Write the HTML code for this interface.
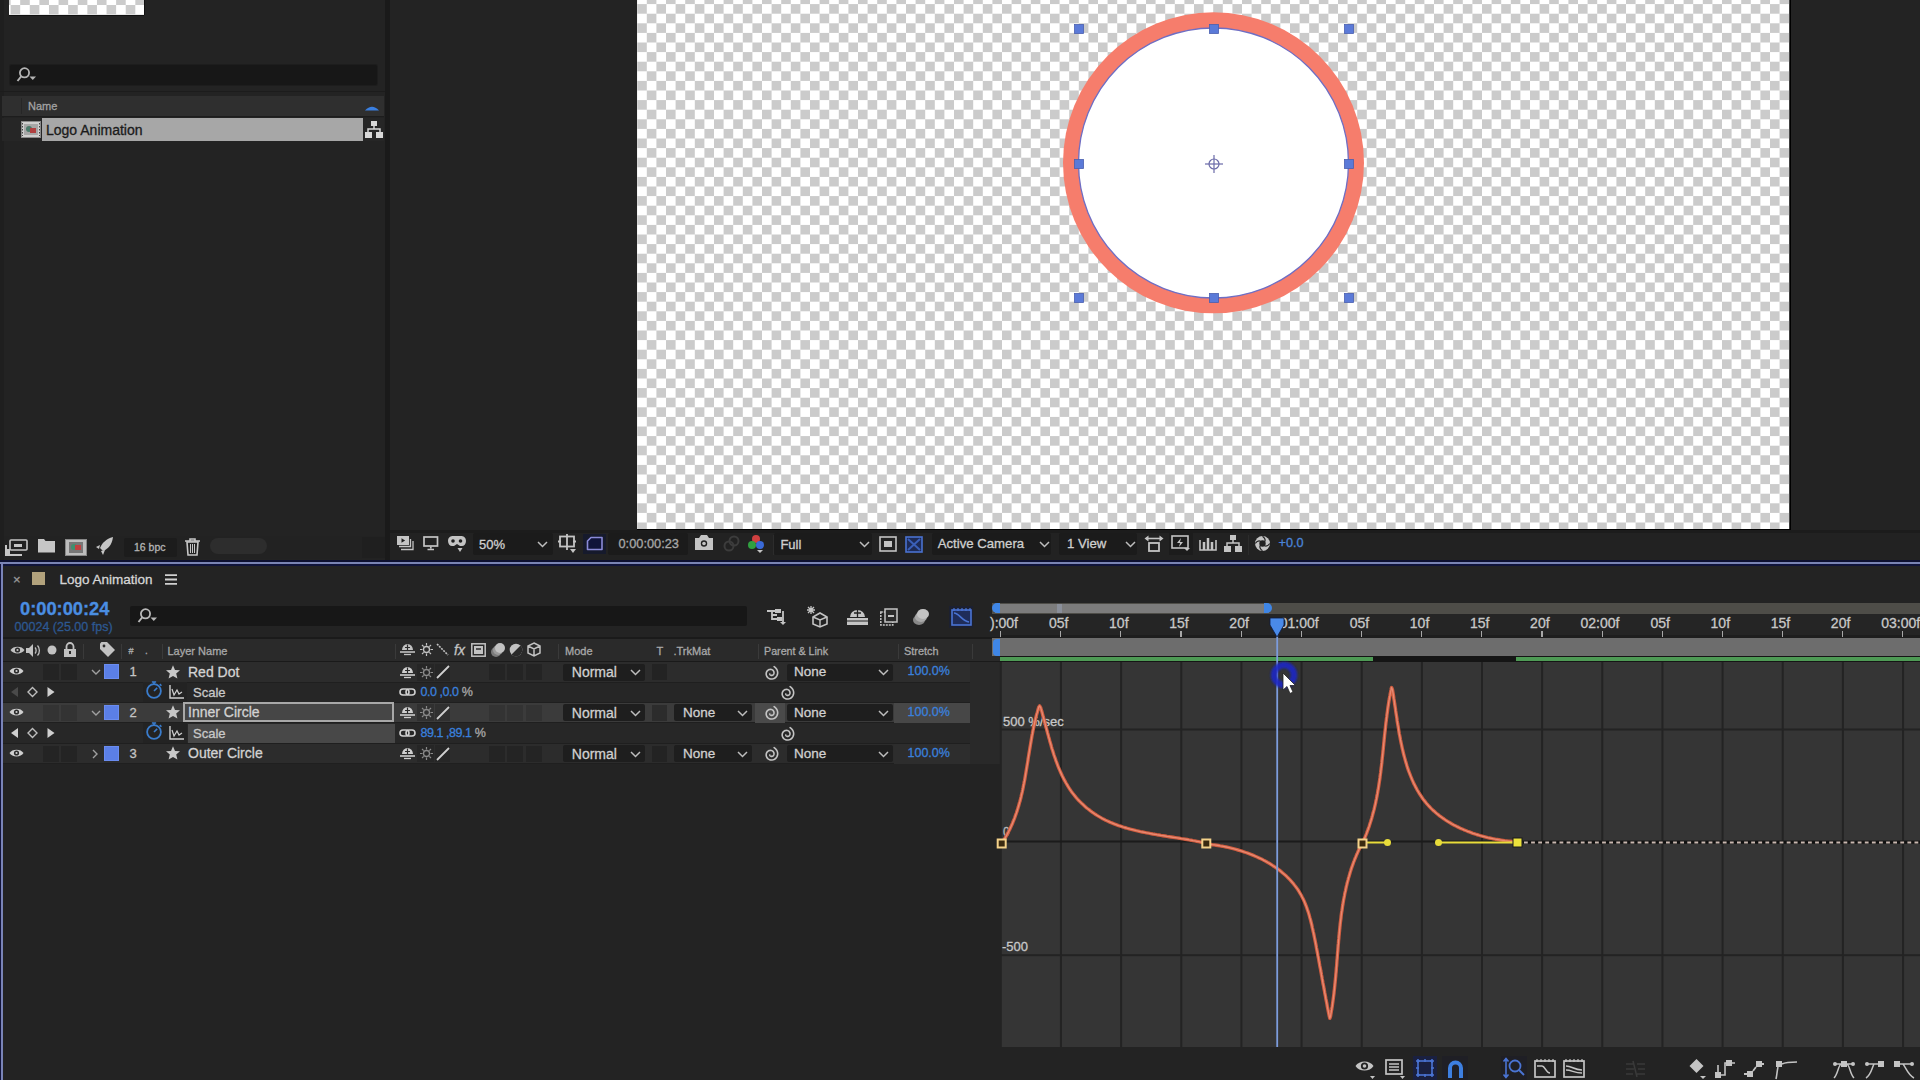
<!DOCTYPE html>
<html><head><meta charset="utf-8"><title>After Effects</title>
<style>
html,body{margin:0;padding:0;}
body{width:1920px;height:1080px;overflow:hidden;background:#232323;position:relative;font-family:"Liberation Sans", sans-serif;}
.a{position:absolute;}
.t{white-space:nowrap;-webkit-text-stroke:0.3px currentColor;}
svg{position:absolute;overflow:visible;}
.hdr svg{margin-top:-1.8px;}
</style></head>
<body>
<div class="a" style="left:0px;top:0px;width:385px;height:560px;background:#232323;"></div>
<div class="a" style="left:0px;top:0px;width:4px;height:560px;background:#1f1f1f;"></div>
<div class="a" style="left:9.2px;top:0;width:135px;height:14.6px;background-color:#fff;background-image:conic-gradient(#cbcbcb 0 25%,#fff 0 50%,#cbcbcb 0 75%,#fff 0);background-size:19.2px 19.2px;background-position:1.6px -4.6px;box-shadow:0 1px 0 0 #111,1px 0 0 0 #111;"></div>
<div class="a" style="left:10px;top:65px;width:367px;height:20px;background:#171717;border-radius:2px;box-shadow:0 0 0 1px #1d1d1d;"></div>
<svg style="left:16px;top:67px" width="24" height="16" viewBox="0 0 24 16"><circle cx="8.5" cy="5.8" r="4.6" fill="none" stroke="#b4b4b4" stroke-width="1.8"/><line x1="5.5" y1="9" x2="1.5" y2="14" stroke="#b4b4b4" stroke-width="2"/><path d="M13.5 9.5 h6.5 l-3.25 3.5z" fill="#b4b4b4"/></svg>
<div class="a" style="left:0px;top:91px;width:385px;height:1px;background:#1c1c1c;"></div>
<div class="a" style="left:2px;top:96px;width:382px;height:20px;background:#2f2f2f;"></div>
<div class="a" style="left:2px;top:116px;width:382px;height:1px;background:#1d1d1d;"></div>
<div class="a" style="left:21px;top:98px;width:1px;height:16px;background:#262626;"></div>
<div class="a t" style="left:28px;top:101px;font-size:11px;line-height:11px;color:#a2a2a2;">Name</div>
<svg style="left:364px;top:103px" width="16" height="9" viewBox="0 0 16 9"><path d="M1 7.5 Q8 0 15 7.5z" fill="#3a7fe0"/></svg>
<div class="a" style="left:2px;top:118px;width:382px;height:23px;background:#262626;"></div>
<div class="a" style="left:42px;top:118px;width:321px;height:23px;background:#a7a7a7;"></div>
<div class="a t" style="left:46px;top:123px;font-size:14px;line-height:14px;color:#1b1b1b;">Logo Animation</div>
<svg style="left:21px;top:121px" width="20" height="17" viewBox="0 0 20 17"><rect x="0.5" y="0.5" width="19" height="16" fill="#cfcfcf" stroke="#8a8a8a"/><rect x="3" y="3" width="14" height="11" fill="#a7a7a7"/><circle cx="8" cy="8" r="3" fill="#4a7a6a"/><rect x="9" y="7" width="6" height="5" fill="#b04040"/><path d="M1.5 2v13M18.5 2v13" stroke="#444" stroke-dasharray="1.5 1.5"/></svg>
<svg style="left:365px;top:121px" width="18" height="17" viewBox="0 0 18 17"><rect x="6" y="0" width="6" height="5" fill="#d8d8d8"/><path d="M9 5v3M3 11V8h12v3" stroke="#d8d8d8" stroke-width="1.5" fill="none"/><rect x="0" y="11" width="7" height="6" fill="#d8d8d8"/><rect x="11" y="11" width="7" height="6" fill="#d8d8d8"/></svg>
<div class="a" style="left:4px;top:536px;width:381px;height:23px;background:#222222;"></div>
<svg style="left:5px;top:539px" width="23" height="17" viewBox="0 0 23 17"><rect x="5" y="1" width="17" height="10" rx="1" fill="none" stroke="#c6c6c6" stroke-width="1.6"/><rect x="9" y="5" width="8" height="3" fill="#c6c6c6"/><path d="M1 6v10h16" fill="none" stroke="#c6c6c6" stroke-width="2"/><rect x="1" y="10" width="4" height="6" fill="#c6c6c6"/></svg>
<svg style="left:38px;top:539px" width="17" height="14" viewBox="0 0 17 14"><path d="M0 0h6l1.5 2H17v11.5H0z" fill="#c6c6c6"/></svg>
<svg style="left:65px;top:539px" width="22" height="17" viewBox="0 0 22 17"><rect x="0.5" y="0.5" width="21" height="16" fill="#bdbdbd" stroke="#888"/><rect x="4" y="3" width="14" height="11" fill="#777"/><circle cx="9" cy="8" r="3" fill="#3f8f6f"/><rect x="10" y="6" width="6" height="5" fill="#c04040"/></svg>
<svg style="left:96px;top:537px" width="18" height="18" viewBox="0 0 18 18"><path d="M17 0 C10 2 6 6 4 11 L7 14 C12 12 16 8 17 0z" fill="#c6c6c6"/><path d="M4 8 L0 10 L3 12z M9 13 L7 18 L5 14z" fill="#c6c6c6"/></svg>
<div class="a" style="left:124px;top:538px;width:53px;height:19px;background:#1c1c1c;border-radius:2px;"></div>
<div class="a t" style="left:134px;top:542px;font-size:10.5px;line-height:10.5px;color:#b4b4b4;">16 bpc</div>
<svg style="left:185px;top:538px" width="15" height="17" viewBox="0 0 15 17"><path d="M0 3h15M5 3V1h5v2" fill="none" stroke="#c6c6c6" stroke-width="1.6"/><path d="M2 4h11l-1 13H3z" fill="none" stroke="#c6c6c6" stroke-width="1.6"/><path d="M5.5 6v9M7.5 6v9M9.5 6v9" stroke="#c6c6c6" stroke-width="1"/></svg>
<div class="a" style="left:210px;top:538px;width:57px;height:16px;background:#2d2d2d;border-radius:8px;"></div>
<div class="a" style="left:362px;top:537px;width:23px;height:21px;background:#1f1f1f;"></div>
<div class="a" style="left:385px;top:0px;width:5px;height:560px;background:#1a1a1a;"></div>
<div class="a" style="left:390px;top:0px;width:1530px;height:529px;background:#232323;"></div>
<svg style="left:0;top:0" width="1920" height="540"><defs><pattern id="ck" patternUnits="userSpaceOnUse" x="637.2" y="-5.5" width="19.2" height="19.2"><rect width="19.2" height="19.2" fill="#ffffff"/><rect x="9.6" y="0" width="9.6" height="9.6" fill="#cbcbcb"/><rect x="0" y="9.6" width="9.6" height="9.6" fill="#cbcbcb"/></pattern></defs><rect x="637" y="0" width="1152.5" height="529" fill="url(#ck)"/><rect x="1789.5" y="0" width="1.5" height="530" fill="#000"/><rect x="637" y="529" width="1154" height="1.5" fill="#000"/><circle cx="1213.5" cy="162.8" r="150.5" fill="#f67d6c"/><circle cx="1213.5" cy="163" r="135" fill="#ffffff"/><circle cx="1213.5" cy="163" r="135" fill="none" stroke="#6e6ec4" stroke-width="1.3"/>
<rect x="1074.5" y="24.5" width="9" height="9" fill="#5b7ad8" stroke="#4a5fb0" stroke-width="0.8"/>
<rect x="1209.5" y="24.5" width="9" height="9" fill="#5b7ad8" stroke="#4a5fb0" stroke-width="0.8"/>
<rect x="1344.5" y="24.5" width="9" height="9" fill="#5b7ad8" stroke="#4a5fb0" stroke-width="0.8"/>
<rect x="1074.5" y="159.5" width="9" height="9" fill="#5b7ad8" stroke="#4a5fb0" stroke-width="0.8"/>
<rect x="1344.5" y="159.5" width="9" height="9" fill="#5b7ad8" stroke="#4a5fb0" stroke-width="0.8"/>
<rect x="1074.5" y="293.5" width="9" height="9" fill="#5b7ad8" stroke="#4a5fb0" stroke-width="0.8"/>
<rect x="1209.5" y="293.5" width="9" height="9" fill="#5b7ad8" stroke="#4a5fb0" stroke-width="0.8"/>
<rect x="1344.5" y="293.5" width="9" height="9" fill="#5b7ad8" stroke="#4a5fb0" stroke-width="0.8"/>
<g stroke="#6a6aa8" fill="none" stroke-width="1.2"><circle cx="1214" cy="164" r="5"/><line x1="1205" y1="164" x2="1223" y2="164"/><line x1="1214" y1="155" x2="1214" y2="173"/></g>
</svg>
<div class="a" style="left:390px;top:530px;width:1530px;height:3px;background:#1c1c1c;"></div>
<div class="a" style="left:390px;top:533px;width:1530px;height:27px;background:#222222;"></div>
<svg style="left:397px;top:536px" width="17" height="15" viewBox="0 0 17 15"><rect x="0" y="0" width="12" height="9" fill="#c4c4c4"/><path d="M4.5 2.2v4.6l3.6-2.3z" fill="#1d1d1d"/><path d="M2 10.5h11.5V3M4 13.5h12V5" fill="none" stroke="#c4c4c4" stroke-width="1.3"/></svg>
<svg style="left:423px;top:535.5px" width="16" height="15" viewBox="0 0 16 15"><rect x="1" y="1" width="13.5" height="9" fill="none" stroke="#c4c4c4" stroke-width="1.7"/><path d="M7.8 10.5v2M4.5 13.5h6.5" stroke="#c4c4c4" stroke-width="1.7"/></svg>
<svg style="left:447px;top:536px" width="20" height="17" viewBox="0 0 20 17"><path d="M1 5C1 1 4 0 6 0h8c2 0 5 1 5 5c0 3-2 5-4 5h-2l-3-2-3 2H5C3 10 1 8 1 5z" fill="#c4c4c4"/><circle cx="6" cy="5" r="1.8" fill="#1d1d1d"/><circle cx="13.5" cy="5" r="1.8" fill="#1d1d1d"/><path d="M10.5 12h5l-2.5 4z" fill="#c4c4c4"/></svg>
<div class="a" style="left:473px;top:533px;width:80px;height:22px;background:#1b1b1b;border-radius:2px;"></div>
<div class="a t" style="left:479px;top:537.5px;font-size:13px;line-height:13px;color:#cfcfcf;">50%</div>
<svg style="left:537px;top:541.0px" width="11" height="7" viewBox="0 0 11 7"><path d="M1 1 L5.5 5.5 L10 1" fill="none" stroke="#bdbdbd" stroke-width="1.5"/></svg>
<svg style="left:557px;top:533px" width="20" height="21" viewBox="0 0 20 21"><rect x="3" y="3.5" width="14" height="10" fill="none" stroke="#c4c4c4" stroke-width="1.8"/><path d="M10 1v16M1 8.5h3M16 8.5h3" stroke="#c4c4c4" stroke-width="1.8"/><path d="M13 16h6l-3 4z" fill="#c4c4c4"/></svg>
<div class="a" style="left:583px;top:534px;width:23px;height:20px;background:#161a2c;"></div>
<svg style="left:585px;top:535px" width="19" height="17" viewBox="0 0 19 17"><path d="M6 2.5h11v12H2.5V6z" fill="#10143a" stroke="#8a8ad8" stroke-width="1.6" stroke-linejoin="round"/></svg>
<div class="a" style="left:608px;top:533px;width:80px;height:22px;background:#1b1b1b;border-radius:2px;"></div>
<div class="a t" style="left:618.5px;top:537.6px;font-size:12.8px;line-height:12.8px;color:#a8a8a8;">0:00:00:23</div>
<svg style="left:695px;top:535px" width="18" height="15" viewBox="0 0 18 15"><path d="M0 3h4l2-3h6l2 3h4v12H0z" fill="#c4c4c4"/><circle cx="9" cy="8.5" r="3.2" fill="#222"/><circle cx="9" cy="8.5" r="1.8" fill="#c4c4c4"/></svg>
<svg style="left:723px;top:536px" width="17" height="16" viewBox="0 0 17 16"><circle cx="6" cy="10" r="4.5" fill="none" stroke="#3c3c3c" stroke-width="2"/><circle cx="11" cy="5" r="4.5" fill="none" stroke="#3c3c3c" stroke-width="2"/></svg>
<svg style="left:747px;top:534px" width="19" height="20" viewBox="0 0 19 20"><circle cx="9" cy="5" r="4" fill="#d04040"/><circle cx="5" cy="11" r="4" fill="#30a040"/><circle cx="13" cy="11" r="4" fill="#3a6ad8"/><path d="M10 16h6l-3 3z" fill="#c4c4c4"/></svg>
<div class="a" style="left:773px;top:535px;width:1px;height:20px;background:#2c2c2c;"></div>
<div class="a" style="left:774px;top:533px;width:98px;height:22px;background:#1b1b1b;border-radius:2px;"></div>
<div class="a t" style="left:780.4px;top:537.5px;font-size:13px;line-height:13px;color:#cfcfcf;">Full</div>
<svg style="left:858.5px;top:541.0px" width="11" height="7" viewBox="0 0 11 7"><path d="M1 1 L5.5 5.5 L10 1" fill="none" stroke="#bdbdbd" stroke-width="1.5"/></svg>
<svg style="left:879px;top:536px" width="18" height="16" viewBox="0 0 18 16"><rect x="1" y="1" width="16" height="14" fill="none" stroke="#c4c4c4" stroke-width="1.6"/><rect x="5" y="5" width="8" height="6" fill="#c4c4c4"/></svg>
<svg style="left:905px;top:536px" width="18" height="17" viewBox="0 0 18 17"><rect x="1" y="1" width="16" height="15" fill="#1d2a55" stroke="#4a72d0" stroke-width="1.6"/><path d="M3 3l12 11M15 3L3 14" stroke="#3a5fb8" stroke-width="2"/></svg>
<div class="a" style="left:932px;top:533px;width:119px;height:22px;background:#1b1b1b;border-radius:2px;"></div>
<div class="a t" style="left:937.7px;top:537.4px;font-size:13.2px;line-height:13.2px;color:#cfcfcf;">Active Camera</div>
<svg style="left:1038.5px;top:541.0px" width="11" height="7" viewBox="0 0 11 7"><path d="M1 1 L5.5 5.5 L10 1" fill="none" stroke="#bdbdbd" stroke-width="1.5"/></svg>
<div class="a" style="left:1059px;top:533px;width:78px;height:22px;background:#1b1b1b;border-radius:2px;"></div>
<div class="a t" style="left:1067px;top:537.4px;font-size:13.2px;line-height:13.2px;color:#cfcfcf;">1 View</div>
<svg style="left:1125px;top:541.0px" width="11" height="7" viewBox="0 0 11 7"><path d="M1 1 L5.5 5.5 L10 1" fill="none" stroke="#bdbdbd" stroke-width="1.5"/></svg>
<svg style="left:1144px;top:535px" width="20" height="17" viewBox="0 0 20 17"><path d="M2 3.5h16" stroke="#c4c4c4" stroke-width="1.6"/><path d="M0.5 3.5l4-3v6zM19.5 3.5l-4-3v6z" fill="#c4c4c4"/><rect x="5" y="8" width="10" height="8" fill="none" stroke="#c4c4c4" stroke-width="1.8"/></svg>
<div class="a" style="left:1169px;top:533px;width:24px;height:22px;background:#1c1c1c;"></div>
<svg style="left:1171px;top:535px" width="20" height="18" viewBox="0 0 20 18"><rect x="1" y="1" width="16" height="12" fill="none" stroke="#c4c4c4" stroke-width="1.6"/><path d="M10 3l-4 5h3l-1 4 4-5H9z" fill="#c4c4c4"/><path d="M13 13h6l-3 3z" fill="#c4c4c4"/></svg>
<svg style="left:1199px;top:536px" width="18" height="15" viewBox="0 0 18 15"><path d="M1 4v10h16V4" fill="none" stroke="#c4c4c4" stroke-width="1.6"/><path d="M5 14V6M9 14V2M13 14V6" stroke="#c4c4c4" stroke-width="2.5"/></svg>
<svg style="left:1224px;top:535px" width="18" height="17" viewBox="0 0 18 17"><rect x="6" y="0" width="6" height="5" fill="#c4c4c4"/><path d="M9 5v3M3 11V8h12v3" stroke="#c4c4c4" stroke-width="1.5" fill="none"/><rect x="0" y="11" width="7" height="6" fill="#c4c4c4"/><rect x="11" y="11" width="7" height="6" fill="#c4c4c4"/></svg>
<div class="a" style="left:1248px;top:535px;width:1px;height:20px;background:#2c2c2c;"></div>
<svg style="left:1254px;top:535px" width="17" height="17" viewBox="0 0 17 17"><circle cx="8.5" cy="8.5" r="7.5" fill="#c4c4c4"/><circle cx="8.5" cy="8.5" r="3.2" fill="#222"/><path d="M8.5 1.2C11 3 11.5 5 10.8 6.5M15.8 8.5c-1.8 2.5-3.8 3-5.3 2.3M8.5 15.8c-2.5-1.8-3-3.8-2.3-5.3M1.2 8.5c1.8-2.5 3.8-3 5.3-2.3" fill="none" stroke="#222" stroke-width="1.2"/></svg>
<div class="a t" style="left:1278.5px;top:537px;font-size:12.7px;line-height:12.7px;color:#4a84d8;">+0.0</div>
<div class="a" style="left:0px;top:560px;width:1920px;height:2px;background:#0d1030;"></div>
<div class="a" style="left:0px;top:562px;width:1920px;height:2px;background:#7a84b4;"></div>
<div class="a" style="left:0px;top:564px;width:1920px;height:1.5px;background:#10143a;"></div>
<div class="a" style="left:0px;top:564px;width:1px;height:516px;background:#12143a;"></div>
<div class="a" style="left:1px;top:563px;width:1.6px;height:517px;background:#7a84b8;"></div>
<div class="a" style="left:2.6px;top:564px;width:1px;height:516px;background:#15173a;"></div>
<div class="a" style="left:3px;top:566px;width:1917px;height:514px;background:#232323;"></div>
<div class="a t" style="left:13px;top:573px;font-size:13px;line-height:13px;color:#9a9a9a;">&#215;</div>
<div class="a" style="left:32px;top:572px;width:13px;height:13px;background:#b2a27c;"></div>
<div class="a t" style="left:59.4px;top:572.5px;font-size:13.5px;line-height:13.5px;color:#d6d6d6;">Logo Animation</div>
<svg style="left:165px;top:574px" width="12" height="11" viewBox="0 0 12 11"><path d="M0 1.2h12M0 5.5h12M0 9.8h12" stroke="#d0d0d0" stroke-width="1.8"/></svg>
<div class="a t" style="left:20px;top:600px;font-size:18.3px;line-height:18.3px;color:#4a8ee2;font-weight:bold;">0:00:00:24</div>
<div class="a t" style="left:14.6px;top:621px;font-size:12.5px;line-height:12.5px;color:#2d5891;">00024 (25.00 fps)</div>
<div class="a" style="left:130px;top:606px;width:617px;height:20px;background:#171717;border-radius:2px;"></div>
<svg style="left:137px;top:608px" width="24" height="16" viewBox="0 0 24 16"><circle cx="8.5" cy="5.8" r="4.6" fill="none" stroke="#b8b8b8" stroke-width="1.8"/><line x1="5.5" y1="9" x2="1.5" y2="14" stroke="#b8b8b8" stroke-width="2"/><path d="M13.5 9.5 h6.5 l-3.25 3.5z" fill="#b8b8b8"/></svg>
<svg style="left:766px;top:608px" width="22" height="18" viewBox="0 0 22 18"><path d="M1 3h8M6 3v8h5M6 7h5M17 3v12" stroke="#c4c4c4" stroke-width="1.8" fill="none"/><rect x="9" y="1" width="6" height="4" fill="#c4c4c4"/><rect x="11" y="9" width="5" height="4" fill="#c4c4c4"/><path d="M14 14h6l-3 3z" fill="#c4c4c4"/></svg>
<svg style="left:806px;top:606px" width="22" height="21" viewBox="0 0 22 21"><path d="M5 0v8M1 4h8M2 1l6 6M8 1L2 7" stroke="#c4c4c4" stroke-width="1.3"/><path d="M14 7l7 4v7l-7 3-7-3v-7z" fill="none" stroke="#c4c4c4" stroke-width="1.6"/><path d="M7 11l7 3 7-3M14 14v7" stroke="#c4c4c4" stroke-width="1.4" fill="none"/></svg>
<svg style="left:847px;top:608px" width="21" height="17" viewBox="0 0 21 17"><path d="M3 9a7.5 7 0 0 1 15 0z" fill="#c4c4c4"/><path d="M10.5 2v10M7 5h7" stroke="#222" stroke-width="1.3"/><rect x="0" y="10" width="21" height="7" fill="#c4c4c4"/><path d="M0 13h21" stroke="#222" stroke-width="1"/></svg>
<svg style="left:880px;top:608px" width="18" height="18" viewBox="0 0 18 18"><rect x="0.8" y="4" width="12" height="13" fill="none" stroke="#c4c4c4" stroke-width="1.5" stroke-dasharray="2 1"/><rect x="5" y="1" width="12" height="13" fill="#2a2a2a" stroke="#c4c4c4" stroke-width="1.5"/><path d="M8 8h6" stroke="#c4c4c4" stroke-width="2"/></svg>
<svg style="left:912px;top:608px" width="18" height="18" viewBox="0 0 18 18"><ellipse cx="7" cy="12" rx="6" ry="5" fill="#888"/><ellipse cx="9" cy="9" rx="6" ry="5" fill="#aaa"/><ellipse cx="11" cy="6" rx="6" ry="5" fill="#c4c4c4"/></svg>
<div class="a" style="left:949px;top:606px;width:24px;height:22px;background:#1c2030;"></div>
<svg style="left:951px;top:607px" width="21" height="19" viewBox="0 0 21 19"><rect x="1" y="3" width="19" height="15" fill="#1f2d5a" stroke="#4a74d4" stroke-width="1.6"/><path d="M3 1v3M7 1v3M11 1v3M15 1v3M19 1v3" stroke="#4a74d4" stroke-width="1.2"/><path d="M3 6c5 0 8 8 15 9" fill="none" stroke="#4a74d4" stroke-width="1.6"/></svg>
<div class="a" style="left:3px;top:637px;width:997px;height:1.5px;background:#1a1a1a;"></div>
<div class="a" style="left:3px;top:638.5px;width:997px;height:22.5px;background:#2a2a2a;"></div>
<div class="a" style="left:3px;top:661px;width:997px;height:1.5px;background:#1a1a1a;"></div>
<div class="a hdr" style="left:0;top:1.5px;width:1000px;height:0">
<svg style="left:9.5px;top:645px" width="15" height="10" viewBox="0 0 15 10"><path d="M0.5 5C3 0.5 12 0.5 14.5 5C12 9.5 3 9.5 0.5 5z" fill="#c2c2c2"/><circle cx="7.5" cy="5" r="2.6" fill="#2a2a2a"/><circle cx="7.5" cy="5" r="1.1" fill="#c2c2c2"/></svg>
<svg style="left:26px;top:643px" width="15" height="15" viewBox="0 0 15 15"><path d="M0 5h3l4-4v13l-4-4H0z" fill="#c2c2c2"/><path d="M9 4.5c1.5 1.5 1.5 4.5 0 6M11.5 2.5c2.5 2.5 2.5 7.5 0 10" fill="none" stroke="#c2c2c2" stroke-width="1.3"/></svg>
<svg style="left:47px;top:645px" width="10" height="10" viewBox="0 0 10 10"><circle cx="5" cy="5" r="4.5" fill="#c2c2c2"/></svg>
<svg style="left:62.5px;top:642px" width="14" height="15" viewBox="0 0 14 15"><path d="M3.5 7V4.5a3.5 3.5 0 0 1 7 0V7" fill="none" stroke="#c2c2c2" stroke-width="1.8"/><rect x="1" y="7" width="12" height="8" fill="#c2c2c2"/><rect x="6" y="9" width="2" height="3" fill="#2a2a2a"/></svg>
<div class="a" style="left:83px;top:642px;width:1px;height:15px;background:#3a3a3a;"></div>
<svg style="left:100px;top:642px" width="15" height="15" viewBox="0 0 15 15"><path d="M0 1.5V7l8 8 7-7-8-8H1.5z" fill="#c2c2c2"/><circle cx="4" cy="4" r="1.4" fill="#2a2a2a"/></svg>
<div class="a" style="left:121px;top:642px;width:1px;height:15px;background:#3a3a3a;"></div>
<div class="a t" style="left:128.5px;top:645.5px;font-size:9px;line-height:9px;color:#a8a8a8;">#</div>
<div class="a t" style="left:145px;top:644.5px;font-size:10px;line-height:10px;color:#a8a8a8;">.</div>
<div class="a" style="left:161.5px;top:642px;width:1px;height:15px;background:#3a3a3a;"></div>
<div class="a t" style="left:167.5px;top:644px;font-size:11px;line-height:11px;color:#a8a8a8;">Layer Name</div>
<div class="a" style="left:394.5px;top:642px;width:1px;height:15px;background:#3a3a3a;"></div>
<svg style="left:400px;top:642px" width="15" height="15" viewBox="0 0 15 15"><path d="M2 8a5.5 6 0 0 1 11 0z" fill="#c2c2c2"/><path d="M7.5 2.5v8M5 5.5h5" stroke="#2b2b2b" stroke-width="1.2"/><path d="M0 10h15" stroke="#c2c2c2" stroke-width="1.6"/><path d="M4 12.5h7" stroke="#c2c2c2" stroke-width="1.3"/></svg>
<svg style="left:420px;top:643px" width="13" height="13" viewBox="0 0 13 13"><circle cx="6.5" cy="6.5" r="3" fill="none" stroke="#c2c2c2" stroke-width="1.3"/><path d="M6.5 0v2.5M6.5 10.5V13M0 6.5h2.5M10.5 6.5H13M2 2l1.7 1.7M9.3 9.3L11 11M11 2L9.3 3.7M3.7 9.3L2 11" stroke="#c2c2c2" stroke-width="1.2"/></svg>
<svg style="left:436px;top:643px" width="13" height="13" viewBox="0 0 13 13"><path d="M1 1L12 12" stroke="#c2c2c2" stroke-width="1.6" stroke-dasharray="2 1"/></svg>
<div class="a t" style="left:454px;top:641.5px;font-size:14px;line-height:14px;color:#c2c2c2;font-family:"Liberation Serif",serif;"><i>fx</i></div>
<svg style="left:471px;top:643px" width="15" height="14" viewBox="0 0 15 14"><rect x="0.8" y="0.8" width="13.4" height="12.4" fill="none" stroke="#c2c2c2" stroke-width="1.5"/><rect x="3" y="3" width="9" height="8" fill="#c2c2c2"/><path d="M5 6h5" stroke="#2a2a2a" stroke-width="1.5"/></svg>
<svg style="left:490px;top:642px" width="16" height="16" viewBox="0 0 16 16"><circle cx="6" cy="10" r="5" fill="#7a7a7a"/><circle cx="8" cy="8" r="5" fill="#9a9a9a"/><circle cx="10" cy="6" r="5" fill="#c2c2c2"/></svg>
<svg style="left:508.7px;top:643px" width="14" height="14" viewBox="0 0 14 14"><circle cx="7" cy="7" r="6.3" fill="#c2c2c2"/><path d="M11.5 2.5L2.5 11.5A6.3 6.3 0 0 0 11.5 2.5z" fill="#2a2a2a"/></svg>
<svg style="left:526.5px;top:642px" width="14" height="15" viewBox="0 0 14 15"><path d="M7 1l6 3v7l-6 3-6-3V4z M1 4l6 3 6-3M7 7v7" fill="none" stroke="#c2c2c2" stroke-width="1.5"/></svg>
<div class="a" style="left:558px;top:642px;width:1px;height:15px;background:#3a3a3a;"></div>
<div class="a t" style="left:565px;top:644px;font-size:11px;line-height:11px;color:#a8a8a8;">Mode</div>
<div class="a t" style="left:656.5px;top:644px;font-size:11px;line-height:11px;color:#a8a8a8;">T</div>
<div class="a t" style="left:673.5px;top:644px;font-size:11px;line-height:11px;color:#a8a8a8;">.TrkMat</div>
<div class="a" style="left:757.5px;top:642px;width:1px;height:15px;background:#3a3a3a;"></div>
<div class="a t" style="left:764px;top:644px;font-size:10.7px;line-height:10.7px;color:#a8a8a8;">Parent &amp; Link</div>
<div class="a" style="left:898px;top:642px;width:1px;height:15px;background:#3a3a3a;"></div>
<div class="a t" style="left:904px;top:644px;font-size:10.9px;line-height:10.9px;color:#a8a8a8;">Stretch</div>
<div class="a" style="left:971.5px;top:642px;width:1px;height:15px;background:#3a3a3a;"></div>
</div>
<div class="a" style="left:3px;top:662px;width:967px;height:20px;background:#2c2c2c;"></div>
<div class="a" style="left:3px;top:682px;width:967px;height:20px;background:#262626;"></div>
<div class="a" style="left:3px;top:702.5px;width:967px;height:20px;background:#3b3b3b;"></div>
<div class="a" style="left:3px;top:723px;width:967px;height:20.5px;background:#272727;"></div>
<div class="a" style="left:3px;top:743.5px;width:967px;height:20px;background:#2c2c2c;"></div>
<div class="a" style="left:3px;top:681.5px;width:967px;height:1px;background:#1f1f1f;"></div>
<div class="a" style="left:3px;top:701.5px;width:967px;height:1px;background:#1f1f1f;"></div>
<div class="a" style="left:3px;top:722.0px;width:967px;height:1px;background:#1f1f1f;"></div>
<div class="a" style="left:3px;top:743.0px;width:967px;height:1px;background:#1f1f1f;"></div>
<div class="a" style="left:3px;top:763.0px;width:967px;height:1px;background:#1f1f1f;"></div>
<div class="a" style="left:970px;top:662px;width:31px;height:102px;background:#292929;"></div>
<div class="a" style="left:3px;top:764px;width:967px;height:316px;background:#232323;"></div>
<svg style="left:8.5px;top:666px" width="15" height="10" viewBox="0 0 15 10"><path d="M0.5 5C3 0.5 12 0.5 14.5 5C12 9.5 3 9.5 0.5 5z" fill="#d0d0d0"/><circle cx="7.5" cy="5" r="2.6" fill="#2a2a2a"/><circle cx="7.5" cy="5" r="1.1" fill="#d0d0d0"/></svg>
<div class="a" style="left:43px;top:664px;width:15.5px;height:16px;background:#242424;"></div>
<div class="a" style="left:61px;top:664px;width:15.5px;height:16px;background:#242424;"></div>
<svg style="left:90.5px;top:669px" width="10" height="6" viewBox="0 0 10 6"><path d="M1 1L5 5L9 1" fill="none" stroke="#a0a0a0" stroke-width="1.4"/></svg>
<div class="a" style="left:104px;top:664px;width:15px;height:15px;background:#5b7fe6;box-shadow:inset 0 0 0 1px #6a8cf0;"></div>
<div class="a t" style="left:129.5px;top:665px;font-size:13px;line-height:13px;color:#c4c4c4;">1</div>
<svg style="left:165.5px;top:664.5px" width="14" height="14" viewBox="0 0 14 14"><path d="M7 0.3l2 4.6 5 .4-3.8 3.3 1.2 4.9L7 10.9 2.6 13.5l1.2-4.9L0 5.3l5-.4z" fill="#c8c8c8"/></svg>
<div class="a t" style="left:188px;top:664.5px;font-size:14px;line-height:14px;color:#d2d2d2;">Red Dot</div>
<svg style="left:400px;top:664.5px" width="15" height="15" viewBox="0 0 15 15"><path d="M2 8a5.5 6 0 0 1 11 0z" fill="#cfcfcf"/><path d="M7.5 2.5v8M5 5.5h5" stroke="#2b2b2b" stroke-width="1.2"/><path d="M0 10h15" stroke="#cfcfcf" stroke-width="1.6"/><path d="M4 12.5h7" stroke="#cfcfcf" stroke-width="1.3"/></svg>
<div class="a" style="left:416.5px;top:663.5px;width:17px;height:17px;background:#262626;"></div>
<svg style="left:419.5px;top:665.5px" width="13" height="13" viewBox="0 0 13 13"><circle cx="6.5" cy="6.5" r="3" fill="none" stroke="#8a8a8a" stroke-width="1.3"/><path d="M6.5 0v2.5M6.5 10.5V13M0 6.5h2.5M10.5 6.5H13M2 2l1.7 1.7M9.3 9.3L11 11M11 2L9.3 3.7M3.7 9.3L2 11" stroke="#8a8a8a" stroke-width="1.2"/></svg>
<div class="a" style="left:435px;top:663.5px;width:15px;height:17px;background:#262626;"></div>
<svg style="left:436px;top:665px" width="14" height="14" viewBox="0 0 14 14"><path d="M1 13L13 1" stroke="#cfcfcf" stroke-width="1.8"/></svg>
<div class="a" style="left:489px;top:664px;width:16px;height:16px;background:#242424;"></div>
<div class="a" style="left:507px;top:664px;width:16px;height:16px;background:#242424;"></div>
<div class="a" style="left:525.5px;top:664px;width:16px;height:16px;background:#242424;"></div>
<div class="a" style="left:562.5px;top:663.5px;width:82.5px;height:17px;background:#1e1e1e;border-radius:2px;"></div>
<div class="a t" style="left:571.8px;top:665.0px;font-size:14px;line-height:14px;color:#d0d0d0;">Normal</div>
<svg style="left:630px;top:669.0px" width="11" height="7" viewBox="0 0 11 7"><path d="M1 1 L5.5 5.5 L10 1" fill="none" stroke="#bdbdbd" stroke-width="1.5"/></svg>
<div class="a" style="left:652px;top:664px;width:15px;height:16px;background:#232323;"></div>
<svg style="left:763px;top:664.5px" width="16" height="16" viewBox="0 0 16 16"><path d="M6.78 8.98 L6.83 9.23 L6.94 9.49 L7.10 9.73 L7.31 9.96 L7.57 10.14 L7.88 10.29 L8.23 10.38 L8.60 10.40 L8.98 10.36 L9.37 10.25 L9.74 10.07 L10.09 9.81 L10.40 9.48 L10.66 9.09 L10.85 8.65 L10.97 8.17 L11.00 7.65 L10.94 7.12 L10.79 6.60 L10.54 6.09 L10.20 5.62 L9.77 5.21 L9.26 4.86 L8.69 4.60 L8.07 4.44 L7.41 4.39 L6.73 4.45 L6.06 4.63 L5.42 4.92 L4.82 5.33 L4.29 5.85 L3.84 6.47 L3.50 7.16 L3.27 7.92 L3.18 8.72 L3.22 9.55 L3.40 10.37 L3.73 11.16 L4.20 11.90 L4.79 12.56 L5.50 13.12 L6.31 13.57 L7.20 13.87 L8.14 14.02 L9.11 14.02 L10.08 13.84 L11.03 13.50 L11.92 13.00 L12.72 12.35 L13.41 11.55 L13.97 10.64 L14.38 9.63 L14.61 8.55 L14.65 7.44 L14.51 6.31 L14.18 5.21 L13.65 4.16 L12.95 3.21 L12.09 2.37 L11.09 1.68" fill="none" stroke="#c4c4c4" stroke-width="1.6" stroke-linecap="round"/></svg>
<div class="a" style="left:787px;top:663.5px;width:105.5px;height:17px;background:#1e1e1e;border-radius:2px;"></div>
<div class="a t" style="left:794px;top:665.25px;font-size:13.5px;line-height:13.5px;color:#d0d0d0;">None</div>
<svg style="left:877.5px;top:669.0px" width="11" height="7" viewBox="0 0 11 7"><path d="M1 1 L5.5 5.5 L10 1" fill="none" stroke="#bdbdbd" stroke-width="1.5"/></svg>
<div class="a" style="left:894px;top:662.5px;width:76px;height:19.5px;background:#2d2d2d;"></div>
<div class="a t" style="left:907.5px;top:665px;font-size:12.5px;line-height:12.5px;color:#3a80dc;">100.0%</div>
<svg style="left:10px;top:686px" width="48" height="12" viewBox="0 0 48 12"><path d="M8 1v10L1 6z" fill="#4a4a4a"/><path d="M22.5 1.5l4.5 4.5-4.5 4.5-4.5-4.5z" fill="none" stroke="#bdbdbd" stroke-width="1.4"/><path d="M37.5 1v10l7-5z" fill="#cfcfcf"/></svg>
<div class="a" style="left:143px;top:682px;width:44px;height:20px;background:#232323;"></div>
<svg style="left:144.5px;top:681px" width="18" height="18" viewBox="0 0 17 17"><circle cx="8.5" cy="9.5" r="6.5" fill="none" stroke="#3a7ccc" stroke-width="1.7"/><path d="M6.5 1h4M8.5 1v2M8.5 9.5l3-3M14 3l1.5 1.5" stroke="#3a7ccc" stroke-width="1.5"/></svg>
<svg style="left:168.5px;top:684.5px" width="15" height="14" viewBox="0 0 15 14"><path d="M1 0v13h14" fill="none" stroke="#cfcfcf" stroke-width="1.4"/><path d="M3 4l2 6 3-5 2 4 3-2" fill="none" stroke="#cfcfcf" stroke-width="1.2"/></svg>
<div class="a t" style="left:193px;top:686px;font-size:13px;line-height:13px;color:#c8c8c8;">Scale</div>
<svg style="left:399px;top:687px" width="17" height="10" viewBox="0 0 17 10"><rect x="1" y="2" width="9" height="6" rx="3" fill="none" stroke="#cfcfcf" stroke-width="1.6"/><rect x="7" y="2" width="9" height="6" rx="3" fill="none" stroke="#cfcfcf" stroke-width="1.6"/></svg>
<div class="a t" style="left:420.5px;top:685.5px;font-size:12.5px;line-height:12.5px;color:#3a80dc;letter-spacing:-0.45px;">0.0 ,0.0 <span style="color:#a8a8a8">%</span></div>
<svg style="left:779px;top:684.5px" width="16" height="16" viewBox="0 0 16 16"><path d="M6.78 8.98 L6.83 9.23 L6.94 9.49 L7.10 9.73 L7.31 9.96 L7.57 10.14 L7.88 10.29 L8.23 10.38 L8.60 10.40 L8.98 10.36 L9.37 10.25 L9.74 10.07 L10.09 9.81 L10.40 9.48 L10.66 9.09 L10.85 8.65 L10.97 8.17 L11.00 7.65 L10.94 7.12 L10.79 6.60 L10.54 6.09 L10.20 5.62 L9.77 5.21 L9.26 4.86 L8.69 4.60 L8.07 4.44 L7.41 4.39 L6.73 4.45 L6.06 4.63 L5.42 4.92 L4.82 5.33 L4.29 5.85 L3.84 6.47 L3.50 7.16 L3.27 7.92 L3.18 8.72 L3.22 9.55 L3.40 10.37 L3.73 11.16 L4.20 11.90 L4.79 12.56 L5.50 13.12 L6.31 13.57 L7.20 13.87 L8.14 14.02 L9.11 14.02 L10.08 13.84 L11.03 13.50 L11.92 13.00 L12.72 12.35 L13.41 11.55 L13.97 10.64 L14.38 9.63 L14.61 8.55 L14.65 7.44 L14.51 6.31 L14.18 5.21 L13.65 4.16 L12.95 3.21 L12.09 2.37 L11.09 1.68" fill="none" stroke="#c4c4c4" stroke-width="1.6" stroke-linecap="round"/></svg>
<svg style="left:8.5px;top:706.5px" width="15" height="10" viewBox="0 0 15 10"><path d="M0.5 5C3 0.5 12 0.5 14.5 5C12 9.5 3 9.5 0.5 5z" fill="#d0d0d0"/><circle cx="7.5" cy="5" r="2.6" fill="#2a2a2a"/><circle cx="7.5" cy="5" r="1.1" fill="#d0d0d0"/></svg>
<div class="a" style="left:43px;top:704.5px;width:15.5px;height:16px;background:#333333;"></div>
<div class="a" style="left:61px;top:704.5px;width:15.5px;height:16px;background:#333333;"></div>
<svg style="left:90.5px;top:709.5px" width="10" height="6" viewBox="0 0 10 6"><path d="M1 1L5 5L9 1" fill="none" stroke="#a0a0a0" stroke-width="1.4"/></svg>
<div class="a" style="left:104px;top:704.5px;width:15px;height:15px;background:#5b7fe6;box-shadow:inset 0 0 0 1px #6a8cf0;"></div>
<div class="a t" style="left:129.5px;top:705.5px;font-size:13px;line-height:13px;color:#c4c4c4;">2</div>
<svg style="left:165.5px;top:705.0px" width="14" height="14" viewBox="0 0 14 14"><path d="M7 0.3l2 4.6 5 .4-3.8 3.3 1.2 4.9L7 10.9 2.6 13.5l1.2-4.9L0 5.3l5-.4z" fill="#c8c8c8"/></svg>
<div class="a" style="left:183px;top:702.3px;width:211px;height:20px;background:#464646;box-sizing:border-box;border:2px solid #a8a8a8;"></div>
<div class="a t" style="left:188px;top:705.0px;font-size:14px;line-height:14px;color:#d2d2d2;">Inner Circle</div>
<svg style="left:400px;top:705.0px" width="15" height="15" viewBox="0 0 15 15"><path d="M2 8a5.5 6 0 0 1 11 0z" fill="#cfcfcf"/><path d="M7.5 2.5v8M5 5.5h5" stroke="#2b2b2b" stroke-width="1.2"/><path d="M0 10h15" stroke="#cfcfcf" stroke-width="1.6"/><path d="M4 12.5h7" stroke="#cfcfcf" stroke-width="1.3"/></svg>
<div class="a" style="left:416.5px;top:704.0px;width:17px;height:17px;background:#303030;"></div>
<svg style="left:419.5px;top:706.0px" width="13" height="13" viewBox="0 0 13 13"><circle cx="6.5" cy="6.5" r="3" fill="none" stroke="#8a8a8a" stroke-width="1.3"/><path d="M6.5 0v2.5M6.5 10.5V13M0 6.5h2.5M10.5 6.5H13M2 2l1.7 1.7M9.3 9.3L11 11M11 2L9.3 3.7M3.7 9.3L2 11" stroke="#8a8a8a" stroke-width="1.2"/></svg>
<div class="a" style="left:435px;top:704.0px;width:15px;height:17px;background:#303030;"></div>
<svg style="left:436px;top:705.5px" width="14" height="14" viewBox="0 0 14 14"><path d="M1 13L13 1" stroke="#cfcfcf" stroke-width="1.8"/></svg>
<div class="a" style="left:489px;top:704.5px;width:16px;height:16px;background:#333333;"></div>
<div class="a" style="left:507px;top:704.5px;width:16px;height:16px;background:#333333;"></div>
<div class="a" style="left:525.5px;top:704.5px;width:16px;height:16px;background:#333333;"></div>
<div class="a" style="left:562.5px;top:704.0px;width:82.5px;height:17px;background:#1e1e1e;border-radius:2px;"></div>
<div class="a t" style="left:571.8px;top:705.5px;font-size:14px;line-height:14px;color:#d0d0d0;">Normal</div>
<svg style="left:630px;top:709.5px" width="11" height="7" viewBox="0 0 11 7"><path d="M1 1 L5.5 5.5 L10 1" fill="none" stroke="#bdbdbd" stroke-width="1.5"/></svg>
<div class="a" style="left:652px;top:704.5px;width:15px;height:16px;background:#2c2c2c;"></div>
<div class="a" style="left:673.5px;top:704.0px;width:78px;height:17px;background:#1e1e1e;border-radius:2px;"></div>
<div class="a t" style="left:683px;top:705.75px;font-size:13.5px;line-height:13.5px;color:#d0d0d0;">None</div>
<svg style="left:737px;top:709.5px" width="11" height="7" viewBox="0 0 11 7"><path d="M1 1 L5.5 5.5 L10 1" fill="none" stroke="#bdbdbd" stroke-width="1.5"/></svg>
<div class="a" style="left:755px;top:702.5px;width:30px;height:20px;background:#4a4a4a;"></div>
<svg style="left:763px;top:705.0px" width="16" height="16" viewBox="0 0 16 16"><path d="M6.78 8.98 L6.83 9.23 L6.94 9.49 L7.10 9.73 L7.31 9.96 L7.57 10.14 L7.88 10.29 L8.23 10.38 L8.60 10.40 L8.98 10.36 L9.37 10.25 L9.74 10.07 L10.09 9.81 L10.40 9.48 L10.66 9.09 L10.85 8.65 L10.97 8.17 L11.00 7.65 L10.94 7.12 L10.79 6.60 L10.54 6.09 L10.20 5.62 L9.77 5.21 L9.26 4.86 L8.69 4.60 L8.07 4.44 L7.41 4.39 L6.73 4.45 L6.06 4.63 L5.42 4.92 L4.82 5.33 L4.29 5.85 L3.84 6.47 L3.50 7.16 L3.27 7.92 L3.18 8.72 L3.22 9.55 L3.40 10.37 L3.73 11.16 L4.20 11.90 L4.79 12.56 L5.50 13.12 L6.31 13.57 L7.20 13.87 L8.14 14.02 L9.11 14.02 L10.08 13.84 L11.03 13.50 L11.92 13.00 L12.72 12.35 L13.41 11.55 L13.97 10.64 L14.38 9.63 L14.61 8.55 L14.65 7.44 L14.51 6.31 L14.18 5.21 L13.65 4.16 L12.95 3.21 L12.09 2.37 L11.09 1.68" fill="none" stroke="#c4c4c4" stroke-width="1.6" stroke-linecap="round"/></svg>
<div class="a" style="left:787px;top:704.0px;width:105.5px;height:17px;background:#1e1e1e;border-radius:2px;"></div>
<div class="a t" style="left:794px;top:705.75px;font-size:13.5px;line-height:13.5px;color:#d0d0d0;">None</div>
<svg style="left:877.5px;top:709.5px" width="11" height="7" viewBox="0 0 11 7"><path d="M1 1 L5.5 5.5 L10 1" fill="none" stroke="#bdbdbd" stroke-width="1.5"/></svg>
<div class="a" style="left:894px;top:703.0px;width:76px;height:19.5px;background:#474747;"></div>
<div class="a t" style="left:907.5px;top:705.5px;font-size:12.5px;line-height:12.5px;color:#3a80dc;">100.0%</div>
<svg style="left:10px;top:727px" width="48" height="12" viewBox="0 0 48 12"><path d="M8 1v10L1 6z" fill="#cfcfcf"/><path d="M22.5 1.5l4.5 4.5-4.5 4.5-4.5-4.5z" fill="none" stroke="#bdbdbd" stroke-width="1.4"/><path d="M37.5 1v10l7-5z" fill="#cfcfcf"/></svg>
<div class="a" style="left:143px;top:723px;width:44px;height:20px;background:#232323;"></div>
<svg style="left:144.5px;top:722px" width="18" height="18" viewBox="0 0 17 17"><circle cx="8.5" cy="9.5" r="6.5" fill="none" stroke="#3a7ccc" stroke-width="1.7"/><path d="M6.5 1h4M8.5 1v2M8.5 9.5l3-3M14 3l1.5 1.5" stroke="#3a7ccc" stroke-width="1.5"/></svg>
<svg style="left:168.5px;top:725.5px" width="15" height="14" viewBox="0 0 15 14"><path d="M1 0v13h14" fill="none" stroke="#cfcfcf" stroke-width="1.4"/><path d="M3 4l2 6 3-5 2 4 3-2" fill="none" stroke="#cfcfcf" stroke-width="1.2"/></svg>
<div class="a" style="left:187.5px;top:723.5px;width:207px;height:19.5px;background:#484848;"></div>
<div class="a t" style="left:193px;top:727px;font-size:13px;line-height:13px;color:#c8c8c8;">Scale</div>
<svg style="left:399px;top:728px" width="17" height="10" viewBox="0 0 17 10"><rect x="1" y="2" width="9" height="6" rx="3" fill="none" stroke="#cfcfcf" stroke-width="1.6"/><rect x="7" y="2" width="9" height="6" rx="3" fill="none" stroke="#cfcfcf" stroke-width="1.6"/></svg>
<div class="a t" style="left:420.5px;top:726.5px;font-size:12.5px;line-height:12.5px;color:#3a80dc;letter-spacing:-0.45px;">89.1 ,89.1 <span style="color:#a8a8a8">%</span></div>
<svg style="left:779px;top:725.5px" width="16" height="16" viewBox="0 0 16 16"><path d="M6.78 8.98 L6.83 9.23 L6.94 9.49 L7.10 9.73 L7.31 9.96 L7.57 10.14 L7.88 10.29 L8.23 10.38 L8.60 10.40 L8.98 10.36 L9.37 10.25 L9.74 10.07 L10.09 9.81 L10.40 9.48 L10.66 9.09 L10.85 8.65 L10.97 8.17 L11.00 7.65 L10.94 7.12 L10.79 6.60 L10.54 6.09 L10.20 5.62 L9.77 5.21 L9.26 4.86 L8.69 4.60 L8.07 4.44 L7.41 4.39 L6.73 4.45 L6.06 4.63 L5.42 4.92 L4.82 5.33 L4.29 5.85 L3.84 6.47 L3.50 7.16 L3.27 7.92 L3.18 8.72 L3.22 9.55 L3.40 10.37 L3.73 11.16 L4.20 11.90 L4.79 12.56 L5.50 13.12 L6.31 13.57 L7.20 13.87 L8.14 14.02 L9.11 14.02 L10.08 13.84 L11.03 13.50 L11.92 13.00 L12.72 12.35 L13.41 11.55 L13.97 10.64 L14.38 9.63 L14.61 8.55 L14.65 7.44 L14.51 6.31 L14.18 5.21 L13.65 4.16 L12.95 3.21 L12.09 2.37 L11.09 1.68" fill="none" stroke="#c4c4c4" stroke-width="1.6" stroke-linecap="round"/></svg>
<svg style="left:8.5px;top:747.5px" width="15" height="10" viewBox="0 0 15 10"><path d="M0.5 5C3 0.5 12 0.5 14.5 5C12 9.5 3 9.5 0.5 5z" fill="#d0d0d0"/><circle cx="7.5" cy="5" r="2.6" fill="#2a2a2a"/><circle cx="7.5" cy="5" r="1.1" fill="#d0d0d0"/></svg>
<div class="a" style="left:43px;top:745.5px;width:15.5px;height:16px;background:#242424;"></div>
<div class="a" style="left:61px;top:745.5px;width:15.5px;height:16px;background:#242424;"></div>
<svg style="left:92px;top:748.5px" width="6" height="10" viewBox="0 0 6 10"><path d="M1 1L5 5L1 9" fill="none" stroke="#a0a0a0" stroke-width="1.4"/></svg>
<div class="a" style="left:104px;top:745.5px;width:15px;height:15px;background:#5b7fe6;box-shadow:inset 0 0 0 1px #6a8cf0;"></div>
<div class="a t" style="left:129.5px;top:746.5px;font-size:13px;line-height:13px;color:#c4c4c4;">3</div>
<svg style="left:165.5px;top:746.0px" width="14" height="14" viewBox="0 0 14 14"><path d="M7 0.3l2 4.6 5 .4-3.8 3.3 1.2 4.9L7 10.9 2.6 13.5l1.2-4.9L0 5.3l5-.4z" fill="#c8c8c8"/></svg>
<div class="a t" style="left:188px;top:746.0px;font-size:14px;line-height:14px;color:#d2d2d2;">Outer Circle</div>
<svg style="left:400px;top:746.0px" width="15" height="15" viewBox="0 0 15 15"><path d="M2 8a5.5 6 0 0 1 11 0z" fill="#cfcfcf"/><path d="M7.5 2.5v8M5 5.5h5" stroke="#2b2b2b" stroke-width="1.2"/><path d="M0 10h15" stroke="#cfcfcf" stroke-width="1.6"/><path d="M4 12.5h7" stroke="#cfcfcf" stroke-width="1.3"/></svg>
<div class="a" style="left:416.5px;top:745.0px;width:17px;height:17px;background:#262626;"></div>
<svg style="left:419.5px;top:747.0px" width="13" height="13" viewBox="0 0 13 13"><circle cx="6.5" cy="6.5" r="3" fill="none" stroke="#8a8a8a" stroke-width="1.3"/><path d="M6.5 0v2.5M6.5 10.5V13M0 6.5h2.5M10.5 6.5H13M2 2l1.7 1.7M9.3 9.3L11 11M11 2L9.3 3.7M3.7 9.3L2 11" stroke="#8a8a8a" stroke-width="1.2"/></svg>
<div class="a" style="left:435px;top:745.0px;width:15px;height:17px;background:#262626;"></div>
<svg style="left:436px;top:746.5px" width="14" height="14" viewBox="0 0 14 14"><path d="M1 13L13 1" stroke="#cfcfcf" stroke-width="1.8"/></svg>
<div class="a" style="left:489px;top:745.5px;width:16px;height:16px;background:#242424;"></div>
<div class="a" style="left:507px;top:745.5px;width:16px;height:16px;background:#242424;"></div>
<div class="a" style="left:525.5px;top:745.5px;width:16px;height:16px;background:#242424;"></div>
<div class="a" style="left:562.5px;top:745.0px;width:82.5px;height:17px;background:#1e1e1e;border-radius:2px;"></div>
<div class="a t" style="left:571.8px;top:746.5px;font-size:14px;line-height:14px;color:#d0d0d0;">Normal</div>
<svg style="left:630px;top:750.5px" width="11" height="7" viewBox="0 0 11 7"><path d="M1 1 L5.5 5.5 L10 1" fill="none" stroke="#bdbdbd" stroke-width="1.5"/></svg>
<div class="a" style="left:652px;top:745.5px;width:15px;height:16px;background:#232323;"></div>
<div class="a" style="left:673.5px;top:745.0px;width:78px;height:17px;background:#1e1e1e;border-radius:2px;"></div>
<div class="a t" style="left:683px;top:746.75px;font-size:13.5px;line-height:13.5px;color:#d0d0d0;">None</div>
<svg style="left:737px;top:750.5px" width="11" height="7" viewBox="0 0 11 7"><path d="M1 1 L5.5 5.5 L10 1" fill="none" stroke="#bdbdbd" stroke-width="1.5"/></svg>
<svg style="left:763px;top:746.0px" width="16" height="16" viewBox="0 0 16 16"><path d="M6.78 8.98 L6.83 9.23 L6.94 9.49 L7.10 9.73 L7.31 9.96 L7.57 10.14 L7.88 10.29 L8.23 10.38 L8.60 10.40 L8.98 10.36 L9.37 10.25 L9.74 10.07 L10.09 9.81 L10.40 9.48 L10.66 9.09 L10.85 8.65 L10.97 8.17 L11.00 7.65 L10.94 7.12 L10.79 6.60 L10.54 6.09 L10.20 5.62 L9.77 5.21 L9.26 4.86 L8.69 4.60 L8.07 4.44 L7.41 4.39 L6.73 4.45 L6.06 4.63 L5.42 4.92 L4.82 5.33 L4.29 5.85 L3.84 6.47 L3.50 7.16 L3.27 7.92 L3.18 8.72 L3.22 9.55 L3.40 10.37 L3.73 11.16 L4.20 11.90 L4.79 12.56 L5.50 13.12 L6.31 13.57 L7.20 13.87 L8.14 14.02 L9.11 14.02 L10.08 13.84 L11.03 13.50 L11.92 13.00 L12.72 12.35 L13.41 11.55 L13.97 10.64 L14.38 9.63 L14.61 8.55 L14.65 7.44 L14.51 6.31 L14.18 5.21 L13.65 4.16 L12.95 3.21 L12.09 2.37 L11.09 1.68" fill="none" stroke="#c4c4c4" stroke-width="1.6" stroke-linecap="round"/></svg>
<div class="a" style="left:787px;top:745.0px;width:105.5px;height:17px;background:#1e1e1e;border-radius:2px;"></div>
<div class="a t" style="left:794px;top:746.75px;font-size:13.5px;line-height:13.5px;color:#d0d0d0;">None</div>
<svg style="left:877.5px;top:750.5px" width="11" height="7" viewBox="0 0 11 7"><path d="M1 1 L5.5 5.5 L10 1" fill="none" stroke="#bdbdbd" stroke-width="1.5"/></svg>
<div class="a" style="left:894px;top:744.0px;width:76px;height:19.5px;background:#2d2d2d;"></div>
<div class="a t" style="left:907.5px;top:746.5px;font-size:12.5px;line-height:12.5px;color:#3a80dc;">100.0%</div>
<div class="a" style="left:1001px;top:596px;width:919px;height:6px;background:#232323;"></div>
<div class="a" style="left:992px;top:602.5px;width:928px;height:11px;background:#4e4d48;"></div>
<div class="a" style="left:995px;top:603.5px;width:274px;height:9px;background:#7c7c7c;"></div>
<div class="a" style="left:1056.5px;top:603.5px;width:5px;height:9px;background:#8a8f9a;"></div>
<div class="a" style="left:991.5px;top:602.5px;width:8px;height:10.5px;background:#3f86e6;border-radius:5px 0 0 5px;"></div>
<div class="a" style="left:1263.5px;top:602.5px;width:8px;height:10.5px;background:#3f86e6;border-radius:0 5px 5px 0;"></div>
<div class="a" style="left:1001px;top:613.5px;width:919px;height:24.5px;background:#252525;"></div>
<div class="a" style="left:1001px;top:634.5px;width:919px;height:3.5px;background:#1e1e1e;"></div>
<div class="a" style="left:1000.0px;top:631px;width:1.2px;height:6px;background:#a8a8a8;"></div>
<div class="a t" style="left:990px;top:615.5px;font-size:14px;line-height:14px;color:#c8c8c8;">):00f</div>
<div class="a" style="left:1060.15px;top:631px;width:1.2px;height:6px;background:#a8a8a8;"></div>
<div class="a t" style="left:1018.6500000000001px;top:615.5px;width:80px;text-align:center;font-size:14px;line-height:14px;color:#c8c8c8;">05f</div>
<div class="a" style="left:1120.3px;top:631px;width:1.2px;height:6px;background:#a8a8a8;"></div>
<div class="a t" style="left:1078.8px;top:615.5px;width:80px;text-align:center;font-size:14px;line-height:14px;color:#c8c8c8;">10f</div>
<div class="a" style="left:1180.45px;top:631px;width:1.2px;height:6px;background:#a8a8a8;"></div>
<div class="a t" style="left:1138.95px;top:615.5px;width:80px;text-align:center;font-size:14px;line-height:14px;color:#c8c8c8;">15f</div>
<div class="a" style="left:1240.6px;top:631px;width:1.2px;height:6px;background:#a8a8a8;"></div>
<div class="a t" style="left:1199.1px;top:615.5px;width:80px;text-align:center;font-size:14px;line-height:14px;color:#c8c8c8;">20f</div>
<div class="a" style="left:1300.75px;top:631px;width:1.2px;height:6px;background:#a8a8a8;"></div>
<div class="a t" style="left:1259.25px;top:615.5px;width:80px;text-align:center;font-size:14px;line-height:14px;color:#c8c8c8;">01:00f</div>
<div class="a" style="left:1360.9px;top:631px;width:1.2px;height:6px;background:#a8a8a8;"></div>
<div class="a t" style="left:1319.4px;top:615.5px;width:80px;text-align:center;font-size:14px;line-height:14px;color:#c8c8c8;">05f</div>
<div class="a" style="left:1421.05px;top:631px;width:1.2px;height:6px;background:#a8a8a8;"></div>
<div class="a t" style="left:1379.55px;top:615.5px;width:80px;text-align:center;font-size:14px;line-height:14px;color:#c8c8c8;">10f</div>
<div class="a" style="left:1481.2px;top:631px;width:1.2px;height:6px;background:#a8a8a8;"></div>
<div class="a t" style="left:1439.7px;top:615.5px;width:80px;text-align:center;font-size:14px;line-height:14px;color:#c8c8c8;">15f</div>
<div class="a" style="left:1541.35px;top:631px;width:1.2px;height:6px;background:#a8a8a8;"></div>
<div class="a t" style="left:1499.85px;top:615.5px;width:80px;text-align:center;font-size:14px;line-height:14px;color:#c8c8c8;">20f</div>
<div class="a" style="left:1601.5px;top:631px;width:1.2px;height:6px;background:#a8a8a8;"></div>
<div class="a t" style="left:1560.0px;top:615.5px;width:80px;text-align:center;font-size:14px;line-height:14px;color:#c8c8c8;">02:00f</div>
<div class="a" style="left:1661.65px;top:631px;width:1.2px;height:6px;background:#a8a8a8;"></div>
<div class="a t" style="left:1620.15px;top:615.5px;width:80px;text-align:center;font-size:14px;line-height:14px;color:#c8c8c8;">05f</div>
<div class="a" style="left:1721.8px;top:631px;width:1.2px;height:6px;background:#a8a8a8;"></div>
<div class="a t" style="left:1680.3px;top:615.5px;width:80px;text-align:center;font-size:14px;line-height:14px;color:#c8c8c8;">10f</div>
<div class="a" style="left:1781.9499999999998px;top:631px;width:1.2px;height:6px;background:#a8a8a8;"></div>
<div class="a t" style="left:1740.4499999999998px;top:615.5px;width:80px;text-align:center;font-size:14px;line-height:14px;color:#c8c8c8;">15f</div>
<div class="a" style="left:1842.1px;top:631px;width:1.2px;height:6px;background:#a8a8a8;"></div>
<div class="a t" style="left:1800.6px;top:615.5px;width:80px;text-align:center;font-size:14px;line-height:14px;color:#c8c8c8;">20f</div>
<div class="a" style="left:1902.25px;top:631px;width:1.2px;height:6px;background:#a8a8a8;"></div>
<div class="a t" style="left:1860.75px;top:615.5px;width:80px;text-align:center;font-size:14px;line-height:14px;color:#c8c8c8;">03:00f</div>
<div class="a" style="left:992px;top:638px;width:928px;height:18px;background:#6d6d6d;"></div>
<div class="a" style="left:992.5px;top:638.5px;width:7px;height:17px;background:#3f86e6;border-radius:4px 0 0 4px;"></div>
<div class="a" style="left:999.5px;top:656px;width:921px;height:6px;background:#151515;"></div>
<div class="a" style="left:1000px;top:657px;width:372.5px;height:4px;background:#4e9a55;"></div>
<div class="a" style="left:1516px;top:657px;width:404px;height:4px;background:#4e9a55;"></div>
<div class="a" style="left:1001px;top:662px;width:919px;height:385px;background:#353535;"></div>
<svg style="left:0;top:0" width="1920" height="1080">
<rect x="999.8" y="662" width="2" height="385" fill="#232323"/>
<rect x="1059.95" y="662" width="2" height="385" fill="#232323"/>
<rect x="1120.1" y="662" width="2" height="385" fill="#232323"/>
<rect x="1180.25" y="662" width="2" height="385" fill="#232323"/>
<rect x="1240.3999999999999" y="662" width="2" height="385" fill="#232323"/>
<rect x="1300.55" y="662" width="2" height="385" fill="#232323"/>
<rect x="1360.7" y="662" width="2" height="385" fill="#232323"/>
<rect x="1420.85" y="662" width="2" height="385" fill="#232323"/>
<rect x="1481.0" y="662" width="2" height="385" fill="#232323"/>
<rect x="1541.1499999999999" y="662" width="2" height="385" fill="#232323"/>
<rect x="1601.3" y="662" width="2" height="385" fill="#232323"/>
<rect x="1661.45" y="662" width="2" height="385" fill="#232323"/>
<rect x="1721.6" y="662" width="2" height="385" fill="#232323"/>
<rect x="1781.7499999999998" y="662" width="2" height="385" fill="#232323"/>
<rect x="1841.8999999999999" y="662" width="2" height="385" fill="#232323"/>
<rect x="1902.05" y="662" width="2" height="385" fill="#232323"/>
<rect x="1001" y="728.5" width="919" height="2" fill="#232323"/>
<rect x="1001" y="954.2" width="919" height="2" fill="#232323"/>
<rect x="1001" y="840.5" width="919" height="2" fill="#1b1b1b"/>
</svg>
<div class="a t" style="left:1003px;top:715px;font-size:13px;line-height:13px;color:#c8c8c8;">500 %/sec</div>
<div class="a t" style="left:1003px;top:825.5px;font-size:12px;line-height:12px;color:#b8b8b8;">0</div>
<div class="a t" style="left:1002px;top:939.5px;font-size:13px;line-height:13px;color:#c8c8c8;">-500</div>
<svg style="left:0;top:0" width="1920" height="1080">
<line x1="1523" y1="842.5" x2="1920" y2="842.5" stroke="#111" stroke-width="2.5"/>
<line x1="1524" y1="842.5" x2="1920" y2="842.5" stroke="#c9b8b0" stroke-width="2" stroke-dasharray="3.8 3.3"/>
<defs><path id="crv" d="M1001.7 843.3 L1002.3 842.5 L1003.0 841.4 L1003.7 840.4 L1004.3 839.3 L1004.9 838.3 L1005.6 837.2 L1006.2 836.1 L1006.8 835.1 L1007.3 834.0 L1007.9 832.9 L1008.5 831.8 L1009.0 830.8 L1009.6 829.7 L1010.1 828.6 L1010.6 827.5 L1011.1 826.4 L1011.6 825.3 L1012.1 824.2 L1012.6 823.1 L1013.0 821.9 L1013.5 820.8 L1013.9 819.7 L1014.4 818.6 L1014.8 817.5 L1015.2 816.3 L1015.6 815.2 L1016.0 814.1 L1016.4 813.0 L1016.8 811.8 L1017.2 810.7 L1017.5 809.5 L1017.9 808.4 L1018.2 807.2 L1018.6 806.1 L1018.9 804.9 L1019.2 803.8 L1019.5 802.6 L1019.9 801.5 L1020.2 800.3 L1020.5 799.2 L1020.8 798.0 L1021.1 796.8 L1021.3 795.7 L1021.6 794.5 L1021.9 793.3 L1022.2 792.1 L1022.4 791.0 L1022.7 789.8 L1022.9 788.6 L1023.2 787.4 L1023.4 786.3 L1023.6 785.1 L1023.9 783.9 L1024.1 782.7 L1024.3 781.5 L1024.6 780.3 L1024.8 779.2 L1025.0 778.0 L1025.2 776.8 L1025.4 775.6 L1025.6 774.4 L1025.8 773.2 L1026.0 772.0 L1026.2 770.8 L1026.4 769.6 L1026.6 768.4 L1026.8 767.2 L1027.0 766.0 L1027.2 764.8 L1027.4 763.7 L1027.6 762.5 L1027.8 761.3 L1028.0 760.1 L1028.1 758.9 L1028.3 757.7 L1028.5 756.5 L1028.7 755.3 L1028.9 754.1 L1029.1 752.9 L1029.3 751.7 L1029.5 750.5 L1029.7 749.3 L1029.9 748.1 L1030.1 746.9 L1030.3 745.7 L1030.5 744.5 L1030.7 743.3 L1030.9 742.1 L1031.1 741.0 L1031.3 739.8 L1031.5 738.6 L1031.7 737.4 L1031.9 736.2 L1032.1 735.0 L1032.4 733.8 L1032.6 732.6 L1032.8 731.5 L1033.0 730.3 L1033.3 729.1 L1033.5 727.9 L1033.8 726.7 L1034.0 725.6 L1034.3 724.4 L1034.5 723.2 L1034.8 722.0 L1035.1 720.9 L1035.4 719.7 L1035.6 718.5 L1035.9 717.4 L1036.2 716.2 L1036.5 715.0 L1036.8 713.9 L1037.2 712.7 L1037.5 711.6 L1037.8 710.4 L1038.1 709.3 L1038.5 708.1 L1038.8 707.0 L1039.6 705.9 L1040.7 707.7 L1041.2 709.6 L1041.8 711.4 L1042.3 713.3 L1042.8 715.2 L1043.3 717.1 L1043.9 719.0 L1044.4 720.9 L1044.9 722.9 L1045.4 724.8 L1045.9 726.8 L1046.5 728.8 L1047.0 730.7 L1047.5 732.7 L1048.1 734.7 L1048.6 736.7 L1049.2 738.7 L1049.7 740.7 L1050.3 742.7 L1050.9 744.7 L1051.4 746.7 L1052.0 748.7 L1052.7 750.7 L1053.3 752.7 L1053.9 754.7 L1054.6 756.7 L1055.3 758.6 L1055.9 760.6 L1056.7 762.6 L1057.4 764.5 L1058.1 766.4 L1058.9 768.3 L1059.7 770.2 L1060.5 772.1 L1061.4 774.0 L1062.2 775.8 L1063.1 777.6 L1064.0 779.4 L1065.0 781.2 L1066.0 783.0 L1067.0 784.7 L1068.0 786.4 L1069.1 788.1 L1070.2 789.8 L1071.3 791.4 L1072.5 793.0 L1073.7 794.5 L1075.0 796.1 L1076.2 797.6 L1077.5 799.1 L1078.8 800.5 L1080.2 801.9 L1081.6 803.3 L1083.0 804.6 L1084.5 806.0 L1085.9 807.3 L1087.4 808.5 L1089.0 809.7 L1090.5 810.9 L1092.1 812.1 L1093.7 813.2 L1095.3 814.3 L1097.0 815.4 L1098.7 816.4 L1100.4 817.4 L1102.1 818.4 L1103.9 819.3 L1105.6 820.2 L1107.4 821.0 L1109.3 821.9 L1111.1 822.7 L1112.9 823.4 L1114.8 824.2 L1116.7 824.9 L1118.6 825.6 L1120.5 826.2 L1122.5 826.9 L1124.4 827.5 L1126.4 828.0 L1128.3 828.6 L1130.3 829.2 L1132.3 829.7 L1134.3 830.2 L1136.3 830.7 L1138.4 831.1 L1140.4 831.6 L1142.4 832.0 L1144.5 832.4 L1146.5 832.8 L1148.6 833.2 L1150.6 833.6 L1152.7 834.0 L1154.7 834.3 L1156.8 834.7 L1158.8 835.0 L1160.9 835.4 L1162.9 835.7 L1165.0 836.0 L1167.0 836.4 L1169.1 836.7 L1171.1 837.0 L1173.2 837.3 L1175.2 837.6 L1177.2 837.9 L1179.2 838.2 L1181.2 838.6 L1183.2 838.9 L1185.2 839.2 L1187.2 839.5 L1189.1 839.9 L1191.1 840.2 L1193.0 840.6 L1194.9 840.9 L1196.8 841.3 L1198.7 841.7 L1200.6 842.1 L1202.5 842.5 L1204.3 842.9 L1206.5 843.4 L1208.3 844.2 L1210.3 844.4 L1212.3 844.7 L1214.3 844.9 L1216.2 845.2 L1218.2 845.5 L1220.2 845.9 L1222.2 846.2 L1224.2 846.6 L1226.2 847.0 L1228.1 847.4 L1230.1 847.9 L1232.1 848.4 L1234.1 848.9 L1236.0 849.4 L1238.0 850.0 L1240.0 850.6 L1241.9 851.2 L1243.8 851.8 L1245.8 852.5 L1247.7 853.2 L1249.6 853.9 L1251.5 854.6 L1253.4 855.4 L1255.2 856.2 L1257.1 857.0 L1258.9 857.9 L1260.8 858.7 L1262.6 859.6 L1264.3 860.6 L1266.1 861.5 L1267.8 862.5 L1269.6 863.5 L1271.3 864.6 L1272.9 865.7 L1274.6 866.8 L1276.2 867.9 L1277.8 869.0 L1279.4 870.2 L1280.9 871.4 L1282.4 872.7 L1283.9 874.0 L1285.4 875.3 L1286.8 876.6 L1288.2 878.0 L1289.6 879.4 L1290.9 880.8 L1292.2 882.3 L1293.4 883.7 L1294.6 885.3 L1295.8 886.8 L1297.0 888.4 L1298.1 890.0 L1299.1 891.6 L1300.1 893.3 L1301.1 895.0 L1302.0 896.8 L1302.9 898.5 L1303.8 900.3 L1304.6 902.2 L1305.3 904.0 L1306.1 905.9 L1306.8 907.8 L1307.4 909.7 L1308.1 911.6 L1308.7 913.6 L1309.3 915.6 L1309.8 917.5 L1310.4 919.5 L1310.9 921.5 L1311.4 923.5 L1311.9 925.5 L1312.3 927.6 L1312.8 929.6 L1313.2 931.6 L1313.7 933.6 L1314.1 935.6 L1314.5 937.7 L1314.9 939.7 L1315.3 941.7 L1315.7 943.7 L1316.1 945.7 L1316.4 947.6 L1316.8 949.6 L1317.2 951.6 L1317.6 953.6 L1317.9 955.5 L1318.3 957.5 L1318.7 959.5 L1319.0 961.4 L1319.4 963.4 L1319.7 965.3 L1320.1 967.3 L1320.5 969.2 L1320.8 971.2 L1321.2 973.1 L1321.5 975.1 L1321.9 977.0 L1322.2 979.0 L1322.6 980.9 L1322.9 982.8 L1323.3 984.8 L1323.7 986.7 L1324.0 988.7 L1324.4 990.6 L1324.7 992.6 L1325.1 994.5 L1325.5 996.5 L1325.8 998.5 L1326.2 1000.4 L1326.6 1002.4 L1327.0 1004.4 L1327.3 1006.4 L1327.7 1008.4 L1328.1 1010.3 L1328.5 1012.3 L1328.9 1014.4 L1329.3 1016.4 L1329.8 1018.3 L1330.4 1016.8 L1330.7 1015.3 L1330.9 1013.9 L1331.2 1012.4 L1331.4 1010.9 L1331.7 1009.5 L1331.9 1008.0 L1332.2 1006.5 L1332.4 1005.0 L1332.6 1003.5 L1332.8 1002.1 L1333.0 1000.6 L1333.2 999.1 L1333.4 997.6 L1333.6 996.1 L1333.8 994.6 L1334.0 993.1 L1334.1 991.6 L1334.3 990.1 L1334.5 988.6 L1334.6 987.1 L1334.8 985.6 L1334.9 984.1 L1335.1 982.6 L1335.2 981.1 L1335.4 979.6 L1335.5 978.1 L1335.7 976.6 L1335.8 975.1 L1335.9 973.6 L1336.1 972.1 L1336.2 970.6 L1336.3 969.1 L1336.4 967.6 L1336.6 966.1 L1336.7 964.6 L1336.8 963.1 L1336.9 961.5 L1337.0 960.0 L1337.2 958.5 L1337.3 957.0 L1337.4 955.5 L1337.5 954.0 L1337.6 952.5 L1337.8 951.0 L1337.9 949.4 L1338.0 947.9 L1338.1 946.4 L1338.2 944.9 L1338.4 943.4 L1338.5 941.9 L1338.6 940.4 L1338.8 938.9 L1338.9 937.4 L1339.0 935.9 L1339.2 934.3 L1339.3 932.8 L1339.5 931.3 L1339.6 929.8 L1339.8 928.3 L1339.9 926.8 L1340.1 925.3 L1340.2 923.8 L1340.4 922.3 L1340.6 920.8 L1340.8 919.3 L1341.0 917.8 L1341.1 916.3 L1341.3 914.8 L1341.5 913.3 L1341.7 911.8 L1342.0 910.3 L1342.2 908.8 L1342.4 907.4 L1342.6 905.9 L1342.9 904.4 L1343.1 902.9 L1343.4 901.4 L1343.6 899.9 L1343.9 898.5 L1344.2 897.0 L1344.5 895.5 L1344.7 894.0 L1345.0 892.6 L1345.4 891.1 L1345.7 889.6 L1346.0 888.2 L1346.3 886.7 L1346.7 885.2 L1347.0 883.8 L1347.4 882.3 L1347.8 880.9 L1348.2 879.4 L1348.5 878.0 L1349.0 876.5 L1349.4 875.1 L1349.8 873.7 L1350.2 872.2 L1350.7 870.8 L1351.1 869.4 L1351.6 867.9 L1352.1 866.5 L1352.6 865.1 L1353.1 863.7 L1353.6 862.2 L1354.2 860.8 L1354.7 859.4 L1355.3 858.0 L1355.9 856.6 L1356.4 855.2 L1357.1 853.8 L1357.7 852.4 L1358.3 851.0 L1358.9 849.7 L1359.6 848.3 L1360.3 846.9 L1361.0 845.5 L1361.7 844.2 L1362.5 843.0 L1363.0 841.8 L1363.6 840.6 L1364.1 839.3 L1364.6 838.1 L1365.2 836.9 L1365.7 835.6 L1366.2 834.4 L1366.7 833.1 L1367.1 831.9 L1367.6 830.6 L1368.1 829.4 L1368.5 828.1 L1369.0 826.8 L1369.4 825.6 L1369.8 824.3 L1370.2 823.0 L1370.6 821.8 L1371.0 820.5 L1371.4 819.2 L1371.8 817.9 L1372.1 816.7 L1372.5 815.4 L1372.8 814.1 L1373.2 812.8 L1373.5 811.5 L1373.9 810.2 L1374.2 809.0 L1374.5 807.7 L1374.8 806.4 L1375.1 805.1 L1375.4 803.8 L1375.7 802.5 L1375.9 801.2 L1376.2 799.9 L1376.5 798.6 L1376.7 797.3 L1377.0 796.0 L1377.2 794.7 L1377.5 793.3 L1377.7 792.0 L1377.9 790.7 L1378.2 789.4 L1378.4 788.1 L1378.6 786.8 L1378.8 785.5 L1379.0 784.1 L1379.2 782.8 L1379.4 781.5 L1379.6 780.2 L1379.8 778.9 L1380.0 777.5 L1380.1 776.2 L1380.3 774.9 L1380.5 773.6 L1380.7 772.2 L1380.8 770.9 L1381.0 769.6 L1381.1 768.3 L1381.3 766.9 L1381.5 765.6 L1381.6 764.3 L1381.8 762.9 L1381.9 761.6 L1382.0 760.3 L1382.2 759.0 L1382.3 757.6 L1382.5 756.3 L1382.6 755.0 L1382.8 753.6 L1382.9 752.3 L1383.0 751.0 L1383.2 749.6 L1383.3 748.3 L1383.4 747.0 L1383.6 745.6 L1383.7 744.3 L1383.8 743.0 L1384.0 741.6 L1384.1 740.3 L1384.2 739.0 L1384.4 737.6 L1384.5 736.3 L1384.6 735.0 L1384.8 733.6 L1384.9 732.3 L1385.1 731.0 L1385.2 729.6 L1385.4 728.3 L1385.5 727.0 L1385.6 725.7 L1385.8 724.3 L1385.9 723.0 L1386.1 721.7 L1386.3 720.3 L1386.4 719.0 L1386.6 717.7 L1386.8 716.4 L1386.9 715.0 L1387.1 713.7 L1387.3 712.4 L1387.5 711.1 L1387.6 709.8 L1387.8 708.4 L1388.0 707.1 L1388.2 705.8 L1388.4 704.5 L1388.6 703.2 L1388.8 701.9 L1389.0 700.6 L1389.3 699.2 L1389.5 697.9 L1389.7 696.6 L1390.0 695.3 L1390.2 694.0 L1390.5 692.7 L1390.7 691.4 L1391.0 690.1 L1391.2 688.8 L1391.6 687.5 L1392.4 689.4 L1392.7 691.1 L1393.0 692.8 L1393.3 694.6 L1393.6 696.4 L1393.8 698.2 L1394.1 700.0 L1394.4 701.8 L1394.6 703.6 L1394.9 705.4 L1395.2 707.3 L1395.5 709.1 L1395.7 711.0 L1396.0 712.9 L1396.3 714.8 L1396.6 716.6 L1396.9 718.5 L1397.1 720.4 L1397.4 722.3 L1397.7 724.2 L1398.1 726.1 L1398.4 728.0 L1398.7 730.0 L1399.0 731.9 L1399.3 733.8 L1399.7 735.7 L1400.1 737.6 L1400.4 739.5 L1400.8 741.4 L1401.2 743.3 L1401.6 745.2 L1402.0 747.1 L1402.4 749.0 L1402.9 750.9 L1403.3 752.8 L1403.8 754.7 L1404.3 756.6 L1404.8 758.4 L1405.3 760.3 L1405.8 762.1 L1406.4 763.9 L1406.9 765.8 L1407.5 767.6 L1408.1 769.4 L1408.7 771.2 L1409.4 772.9 L1410.1 774.7 L1410.8 776.5 L1411.5 778.2 L1412.2 779.9 L1413.0 781.6 L1413.7 783.3 L1414.6 784.9 L1415.4 786.6 L1416.3 788.2 L1417.1 789.8 L1418.1 791.4 L1419.0 793.0 L1420.0 794.5 L1421.0 796.0 L1422.0 797.5 L1423.0 799.0 L1424.1 800.4 L1425.3 801.9 L1426.4 803.3 L1427.6 804.6 L1428.8 806.0 L1430.1 807.3 L1431.3 808.6 L1432.6 809.9 L1434.0 811.1 L1435.3 812.3 L1436.7 813.5 L1438.2 814.7 L1439.6 815.8 L1441.1 816.9 L1442.6 818.0 L1444.1 819.0 L1445.6 820.1 L1447.2 821.1 L1448.8 822.1 L1450.4 823.0 L1452.0 824.0 L1453.7 824.9 L1455.3 825.7 L1457.0 826.6 L1458.7 827.4 L1460.4 828.3 L1462.2 829.0 L1463.9 829.8 L1465.7 830.5 L1467.5 831.3 L1469.3 831.9 L1471.1 832.6 L1472.9 833.3 L1474.7 833.9 L1476.5 834.5 L1478.4 835.0 L1480.2 835.6 L1482.1 836.1 L1484.0 836.6 L1485.8 837.1 L1487.7 837.6 L1489.6 838.0 L1491.5 838.4 L1493.4 838.8 L1495.3 839.2 L1497.2 839.5 L1499.1 839.8 L1501.0 840.1 L1502.9 840.4 L1504.7 840.7 L1506.6 840.9 L1508.5 841.1 L1510.4 841.3 L1512.3 841.5 L1514.2 841.7 L1516.1 841.8 L1517.6 842.5" fill="none" stroke-linejoin="round"/></defs>
<use href="#crv" stroke="#cf5d40" stroke-width="3.4"/>
<use href="#crv" stroke="#e98a72" stroke-width="1.3"/>
<line x1="1362.5" y1="842.5" x2="1387.5" y2="842.5" stroke="#e8dc3a" stroke-width="2"/>
<line x1="1438.5" y1="842.5" x2="1517" y2="842.5" stroke="#e8dc3a" stroke-width="2"/>
<circle cx="1387.5" cy="842.5" r="3.5" fill="#e8dc3a"/>
<circle cx="1438.5" cy="842.5" r="3.5" fill="#e8dc3a"/>
<rect x="997.7" y="839.5" width="8" height="8" fill="#3a2a10" stroke="#f4d28a" stroke-width="2"/>
<rect x="1202.3" y="839.5" width="8" height="8" fill="#3a2a10" stroke="#f4d28a" stroke-width="2"/>
<rect x="1358.5" y="839.5" width="8" height="8" fill="#3a2a10" stroke="#f4d28a" stroke-width="2"/>
<rect x="1513" y="838" width="9" height="9" fill="#ece23c" stroke="#1a1a1a" stroke-width="1"/>
<rect x="1276.3" y="620" width="1.8" height="427" fill="#7c9cdc"/>
<path d="M1270 618 h14 v7 l-7 12 l-7 -12z" fill="#4a8ae8" stroke="#0d1a40" stroke-width="0.8"/>
<defs><filter id="bl" x="-50%" y="-50%" width="200%" height="200%"><feGaussianBlur stdDeviation="0.9"/></filter></defs>
<circle cx="1284" cy="675" r="10" fill="none" stroke="#1a26c4" stroke-width="6.5" opacity="0.9" filter="url(#bl)"/>
<path d="M1283 673 L1283 690 L1287 686.5 L1290 693.5 L1293 692 L1290 685.5 L1295.5 685.5z" fill="#ffffff" stroke="#222" stroke-width="0.8"/>
</svg>
<div class="a" style="left:3px;top:1047px;width:1917px;height:33px;background:#232323;"></div>
<svg style="left:1355px;top:1059px" width="21" height="21" viewBox="0 0 21 21"><path d="M0.5 7C4 1 15 1 18.5 7C15 13 4 13 0.5 7z" fill="#c4c4c4"/><circle cx="9.5" cy="7" r="3.6" fill="#232323"/><circle cx="9.5" cy="7" r="1.8" fill="#c4c4c4"/><path d="M15 17h5l-2.5 3z" fill="#c4c4c4"/></svg>
<svg style="left:1385px;top:1059px" width="21" height="21" viewBox="0 0 21 21"><rect x="1" y="1" width="16" height="14" fill="none" stroke="#c4c4c4" stroke-width="1.7"/><path d="M4 5h10M4 8h10M4 11h10" stroke="#c4c4c4" stroke-width="1.4"/><path d="M15 17h5l-2.5 3z" fill="#c4c4c4"/></svg>
<div class="a" style="left:1413px;top:1056px;width:24px;height:24px;background:#1a2040;"></div>
<svg style="left:1415px;top:1058px" width="20" height="20" viewBox="0 0 20 20"><rect x="3" y="3" width="14" height="14" fill="none" stroke="#4a74d4" stroke-width="1.6"/><path d="M1 3h4M15 3h4M1 17h4M15 17h4M3 1v4M17 1v4M3 15v4M17 15v4M10 1v3M10 16v3M1 10h3M16 10h3" stroke="#4a74d4" stroke-width="1.5"/></svg>
<div class="a" style="left:1442px;top:1056px;width:26px;height:24px;background:#1f1f25;"></div>
<svg style="left:1445px;top:1058px" width="20" height="22" viewBox="0 0 20 22"><path d="M5 20V10a5.5 5.5 0 0 1 11 0v10" fill="none" stroke="#3d7fe0" stroke-width="4"/></svg>
<div class="a" style="left:1501px;top:1056px;width:26px;height:24px;background:#1f1f25;"></div>
<svg style="left:1503px;top:1057px" width="22" height="22" viewBox="0 0 22 22"><path d="M3 2v18M0.5 4.5L3 1.5l2.5 3M0.5 17.5L3 20.5l2.5-3" fill="none" stroke="#4a74d4" stroke-width="1.6"/><circle cx="12" cy="9" r="5.5" fill="none" stroke="#4a74d4" stroke-width="1.8"/><path d="M16 13l5 5" stroke="#4a74d4" stroke-width="2"/></svg>
<svg style="left:1534px;top:1058px" width="22" height="22" viewBox="0 0 22 22"><rect x="1" y="3" width="20" height="16" fill="none" stroke="#c4c4c4" stroke-width="1.7"/><path d="M3 1v3M7 1v3M11 1v3M15 1v3M19 1v3" stroke="#c4c4c4" stroke-width="1.2"/><path d="M3 8h5c3 0 4 7 8 7" fill="none" stroke="#c4c4c4" stroke-width="1.6"/></svg>
<svg style="left:1563px;top:1058px" width="22" height="22" viewBox="0 0 22 22"><rect x="1" y="3" width="20" height="16" fill="none" stroke="#c4c4c4" stroke-width="1.7"/><path d="M3 1v3M7 1v3M11 1v3M15 1v3M19 1v3" stroke="#c4c4c4" stroke-width="1.2"/><path d="M3 8c6 0 8 4 16 4M3 12c6 0 8 3 16 3" fill="none" stroke="#c4c4c4" stroke-width="1.5"/></svg>
<svg style="left:1624px;top:1059px" width="23" height="20" viewBox="0 0 23 20"><path d="M2 5h7M13 5h8M2 10h8M14 10h7M2 15h7M13 15h8M9 2l4 16" stroke="#3a3a3a" stroke-width="1.5"/></svg>
<svg style="left:1688px;top:1057px" width="19" height="23" viewBox="0 0 19 23"><path d="M8.5 2l7 7-7 7-7-7z" fill="#c4c4c4"/><path d="M12 19h6l-3 3z" fill="#c4c4c4"/></svg>
<svg style="left:1714px;top:1058px" width="22" height="22" viewBox="0 0 22 22"><rect x="1" y="14" width="6" height="6" fill="#c4c4c4"/><rect x="12" y="2" width="6" height="6" fill="#c4c4c4"/><path d="M7 17h4V5h1M18 5h3M4 14V7" fill="none" stroke="#c4c4c4" stroke-width="1.6"/></svg>
<svg style="left:1743px;top:1058px" width="22" height="22" viewBox="0 0 22 22"><rect x="4" y="13" width="6" height="6" fill="#c4c4c4"/><rect x="13" y="3" width="6" height="6" fill="#c4c4c4"/><path d="M1 16h3M10 13l3-4M19 6h2" fill="none" stroke="#c4c4c4" stroke-width="1.8"/></svg>
<svg style="left:1774px;top:1058px" width="24" height="22" viewBox="0 0 24 22"><rect x="2" y="3" width="6" height="6" fill="#c4c4c4"/><path d="M8 6c4-2 9-2 15-2M4 9C3 13 3 17 2 21" fill="none" stroke="#c4c4c4" stroke-width="1.6"/></svg>
<svg style="left:1832px;top:1058px" width="24" height="22" viewBox="0 0 24 22"><rect x="9" y="3" width="6" height="6" fill="#c4c4c4"/><circle cx="3" cy="6" r="2" fill="#c4c4c4"/><circle cx="21" cy="6" r="2" fill="#c4c4c4"/><path d="M3 6h18M9 6C6 8 6 16 2 20M15 6c3 2 3 10 7 14" fill="none" stroke="#c4c4c4" stroke-width="1.5"/></svg>
<svg style="left:1864px;top:1058px" width="22" height="22" viewBox="0 0 22 22"><rect x="14" y="3" width="6" height="6" fill="#c4c4c4"/><circle cx="3" cy="6" r="2" fill="#c4c4c4"/><path d="M3 6h11M10 6C8 10 7 17 2 20" fill="none" stroke="#c4c4c4" stroke-width="1.5"/></svg>
<svg style="left:1893px;top:1058px" width="23" height="22" viewBox="0 0 23 22"><rect x="1" y="3" width="6" height="6" fill="#c4c4c4"/><circle cx="19" cy="6" r="2" fill="#c4c4c4"/><path d="M7 6h12M10 6c3 4 5 11 11 14" fill="none" stroke="#c4c4c4" stroke-width="1.5"/></svg>
</body></html>
